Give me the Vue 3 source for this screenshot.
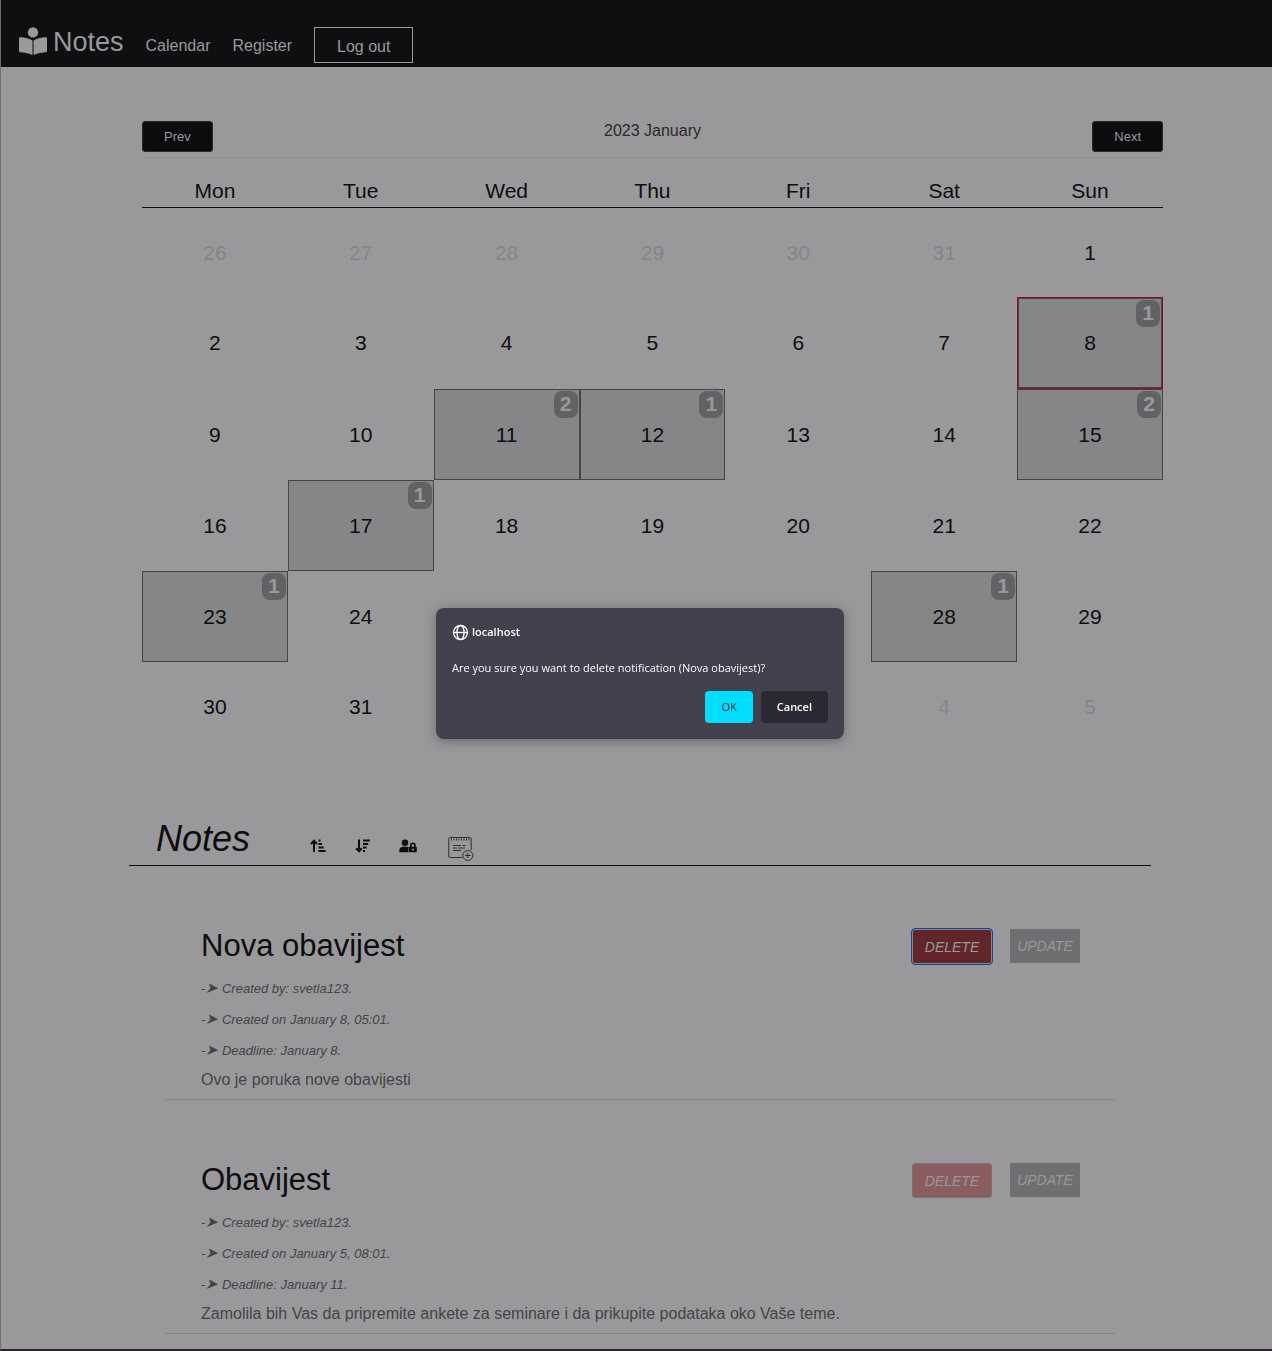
<script setup>
const dayNames = ['Mon', 'Tue', 'Wed', 'Thu', 'Fri', 'Sat', 'Sun']

const counts = { 8: 1, 11: 2, 12: 1, 15: 2, 17: 1, 23: 1, 28: 1 }
const today = 8

const cells = [
  ...[26, 27, 28, 29, 30, 31].map((day) => ({ day, outside: true })),
  ...Array.from({ length: 31 }, (_, i) => ({
    day: i + 1,
    outside: false,
    count: counts[i + 1] || 0,
    today: i + 1 === today,
  })),
  ...[1, 2, 3, 4, 5].map((day) => ({ day, outside: true })),
]
const weeks = Array.from({ length: 6 }, (_, i) => cells.slice(i * 7, i * 7 + 7))

const notes = [
  {
    title: 'Nova obavijest',
    meta: ['Created by: svetla123.', 'Created on January 8, 05:01.', 'Deadline: January 8.'],
    text: 'Ovo je poruka nove obavijesti',
    focused: true,
  },
  {
    title: 'Obavijest',
    meta: ['Created by: svetla123.', 'Created on January 5, 08:01.', 'Deadline: January 11.'],
    text: 'Zamolila bih Vas da pripremite ankete za seminare i da prikupite podataka oko Vaše teme.',
    focused: false,
  },
]
</script>

<template>
  <div class="page">
    <header class="navbar">
      <a class="brand" href="#">
        <svg width="28" height="28" viewBox="0 0 28 28" aria-hidden="true">
          <circle cx="14" cy="5.4" r="5.2" />
          <path d="M13.5 13.4C10.8 11.4 6 10.4 1.2 10.2.5 10.2 0 10.7 0 11.3v12.8c0 .6.5 1.1 1.1 1.1 3.7.2 8.5 1 11.6 2.500.4.2.8 0 .8-.5z" />
          <path d="M14.500 13.4C17.200 11.400 22 10.400 26.800 10.200c.7 0 1.200.5 1.200 1.100v12.800c0 .6-.5 1.100-1.100 1.100-3.700.2-8.500 1-11.600 2.500-.4.2-.8 0-.8-.5z" />
        </svg>
        <span>Notes</span>
      </a>
      <nav class="links">
        <a href="#">Calendar</a>
        <a href="#">Register</a>
        <button type="button" class="logout">Log out</button>
      </nav>
    </header>

    <main>
      <section class="calendar">
        <div class="month-bar">
          <button type="button">Prev</button>
          <span class="month">2023 January</span>
          <button type="button" class="next">Next</button>
        </div>
        <table>
          <thead>
            <tr>
              <th v-for="name in dayNames" :key="name" scope="col">{{ name }}</th>
            </tr>
          </thead>
          <tbody>
            <tr v-for="(week, w) in weeks" :key="w">
              <td
                v-for="(cell, d) in week"
                :key="d"
                :class="{ outside: cell.outside, busy: cell.count, today: cell.today }"
              >
                {{ cell.day }}<span v-if="cell.count" class="badge">{{ cell.count }}</span>
              </td>
            </tr>
          </tbody>
        </table>
      </section>

      <section class="notes">
        <div class="notes-head">
          <h1>Notes</h1>
          <div class="tools">
            <button type="button" class="small" aria-label="Sort ascending">
              <svg width="16" height="14" viewBox="0 0 16 14">
                <path d="M4 13V2M1 5l3-3.2L7 5" class="stroke" />
                <path d="M8.5.5h2v2h-2zM8.500 4h3.500v2H8.500zM8.500 7.500h5.200v2H8.500zM8.500 11h7v2h-7z" />
              </svg>
            </button>
            <button type="button" class="small" aria-label="Sort descending">
              <svg width="16" height="14" viewBox="0 0 16 14">
                <path d="M4 .5V12M1.200 9.200L4 12.200l2.800-3" class="stroke" />
                <path d="M8 .5h7v2H8zM8 4h5.200v2H8zM8 7.500h3.500v2H8zM8 11h2v2H8z" />
              </svg>
            </button>
            <button type="button" class="small" aria-label="Private notes">
              <svg width="18" height="14" viewBox="0 0 18 14">
                <circle cx="6" cy="3.7" r="3.3" />
                <path d="M.3 13.200v-1.700C.3 9.400 2 7.800 4.100 7.800h4.100c.7 0 1.300.2 1.800.4-.4.4-.5.8-.5 1.300v3c0 .3 0 .5.2.7z" />
                <path fill-rule="evenodd" d="M11 7.800V6.500a2.900 2.900 0 0 1 5.800 0v1.300h.2c.5 0 .8.4.8.8v3.800c0 .5-.4.8-.8.8h-6.200c-.5 0-.8-.4-.8-.8V8.600c0-.5.4-.8.8-.8zm1.600 0h2.600V6.500a1.300 1.300 0 0 0-2.600 0zm1.300 1.600a1 1 0 1 0 0 2.100 1 1 0 0 0 0-2.100z" />
              </svg>
            </button>
            <button type="button" class="add" aria-label="Add note">
              <svg width="26" height="24" viewBox="0 0 26 24" class="outline">
                <path d="M14 20.500H2.200a1.400 1.400 0 0 1-1.400-1.400V1.900C.8 1.100 1.400.5 2.200.5h19.600c.8 0 1.400.6 1.400 1.400V13" />
                <path d="M3.500 1.500v2M6 1.500v2M8.500 1.500v2M11 1.500v2M13.500 1.500v2M16 1.500v2M18.500 1.500v2M21 1.500v2" />
                <path d="M5 8.500h8M14.500 8.500h3M5 11h4M10 11h7M5 13.500h8" />
                <circle cx="19.800" cy="18.500" r="5" />
                <path d="M17 18.500h5.600M19.800 15.700v5.600" />
              </svg>
            </button>
          </div>
        </div>

        <article v-for="note in notes" :key="note.title" class="note">
          <div class="note-head">
            <h2>{{ note.title }}</h2>
            <div class="actions">
              <button type="button" class="delete" :class="{ focused: note.focused }">DELETE</button>
              <button type="button" class="update">UPDATE</button>
            </div>
          </div>
          <ul>
            <li v-for="line in note.meta" :key="line">-<span class="arrow">➤</span> {{ line }}</li>
          </ul>
          <p>{{ note.text }}</p>
        </article>
      </section>
    </main>

    <div class="dialog" role="alertdialog" aria-labelledby="origin" aria-describedby="question">
      <div class="origin">
        <svg width="17" height="17" viewBox="0 0 17 17" aria-hidden="true">
          <circle cx="8.5" cy="8.5" r="7" />
          <ellipse cx="8.5" cy="8.5" rx="3.6" ry="7" />
          <path d="M1.500 8.500h14" />
        </svg>
        <span id="origin">localhost</span>
      </div>
      <div id="question" class="question">Are you sure you want to delete notification (Nova obavijest)?</div>
      <div class="choices">
        <button type="button" class="ok">OK</button>
        <button type="button" class="cancel">Cancel</button>
      </div>
    </div>
  </div>
</template>

<style>
body {
  margin: 0;
  background: #99999b;
}
</style>

<style scoped>
* {
  box-sizing: border-box;
}
.page {
  min-height: 100vh;
  border-left: 1px solid #6d6d6f;
  border-bottom: 2px solid #262329;
  background: #99999b;
  color: #0d0d0f;
  font: 16px "Liberation Sans", Arial, sans-serif;
}
button {
  font: inherit;
  color: inherit;
  padding: 0;
  margin: 0;
  border: 0;
  background: none;
}
h1, h2, p, ul {
  margin: 0;
  padding: 0;
  font-weight: 400;
}
a {
  color: inherit;
  text-decoration: none;
}

.navbar {
  display: flex;
  align-items: flex-start;
  gap: 22px;
  padding: 27px 18px 4px;
  background: #0f0f11;
  color: #99999b;
}
.brand {
  display: flex;
  gap: 6px;
  font-size: 27px;
  line-height: 30px;
}
.brand svg {
  fill: #99999b;
}
.links {
  display: flex;
  gap: 22px;
  height: 36px;
  line-height: 38px;
}
.logout {
  height: 36px;
  padding: 0 22px;
  border: 1px solid #99999b;
}

.calendar {
  padding: 54px 109px 0 141px;
}
.month-bar {
  display: grid;
  grid-template-columns: 1fr auto 1fr;
  align-items: start;
  padding-bottom: 5px;
  border-bottom: 1px solid #8f8f91;
  color: #29292b;
}
.month-bar button {
  justify-self: start;
  height: 31px;
  padding: 0 21px;
  border: 1px solid #2a2a2c;
  border-radius: 3px;
  background: #0c0c0e;
  color: #99999b;
  font-size: 13px;
}
.month-bar .next {
  justify-self: end;
}
.month {
  line-height: 20px;
}
table {
  width: 100%;
  table-layout: fixed;
  border-collapse: separate;
  border-spacing: 0;
  font-size: 21px;
}
th {
  padding: 21px 0 4px;
  border-bottom: 1px solid #0d0d0f;
  font-weight: 400;
  line-height: 24px;
}
td {
  position: relative;
  height: 89px;
  padding: 0;
  text-align: center;
  vertical-align: middle;
}
.outside {
  color: #858587;
}
.busy {
  height: 91px;
  border: 1px solid #444446;
  background: #868688;
}
.today {
  height: 92px;
  border-color: #940f16;
  box-shadow: inset 0 0 0 1px #444446;
}
.badge {
  position: absolute;
  top: 1px;
  right: 1px;
  width: 24px;
  padding-bottom: 2px;
  border-radius: 8px;
  background: #626264;
  color: #99999b;
  font-weight: 700;
  line-height: 25px;
}
.today .badge {
  top: 2px;
  right: 2px;
}

.notes {
  padding: 66px 121px 13px 128px;
}
.notes-head {
  display: flex;
  align-items: flex-end;
  gap: 59px;
  padding: 0 27px 5px;
  border-bottom: 1px solid #0d0d0f;
}
h1 {
  font-size: 36px;
  font-style: italic;
  line-height: 43px;
}
.tools {
  display: flex;
  gap: 27px;
}
.tools button {
  display: flex;
  justify-content: center;
  width: 18px;
  height: 24px;
}
.tools .small {
  padding-top: 3px;
}
.tools .add {
  width: 34px;
  padding-top: 1px;
}
.tools svg {
  flex: none;
  fill: #0d0d0f;
}
.stroke {
  fill: none;
  stroke: #0d0d0f;
  stroke-width: 2;
}
.tools .outline {
  fill: none;
  stroke: #2e2e30;
}
.note {
  margin: 0 36px;
  padding: 60px 35px 7px 36px;
  border-bottom: 1px solid #868688;
  color: #444446;
}
.note-head {
  display: flex;
  justify-content: space-between;
  margin-bottom: 12px;
}
h2 {
  color: #0d0d0f;
  font-size: 31px;
  line-height: 40px;
}
.actions {
  display: flex;
  align-items: flex-start;
  gap: 18px;
  height: 38px;
  padding-top: 3px;
  font-size: 14px;
  font-style: italic;
}
.delete {
  width: 80px;
  height: 35px;
  border: 1px solid #7c7274;
  border-radius: 3px;
  background: #8c5d60;
  color: #99999b;
}
.delete.focused {
  border-color: #858587;
  outline: 1px solid #12479a;
  background: #62262a;
}
.update {
  width: 70px;
  height: 34px;
  background: #6f6f71;
  color: #99999b;
}
ul {
  display: flex;
  flex-direction: column;
  gap: 10px;
  list-style: none;
  font-size: 13px;
  font-style: italic;
  line-height: 21px;
}
li {
  height: 21px;
}
.arrow {
  font-size: 15px;
  line-height: 1;
}
.note p {
  margin-top: 7px;
  line-height: 24px;
}

.dialog {
  position: fixed;
  top: calc(50% - 68px);
  left: calc(50% - 200px);
  width: 408px;
  padding: 16px;
  border-radius: 8px;
  background: #42414d;
  box-shadow: 0 2px 12px rgba(20, 20, 26, 0.35);
  color: #fbfbfe;
  font: 500 11px/18px "Open Sans", "Noto Sans", sans-serif;
}
.origin {
  display: flex;
  align-items: center;
  gap: 3px;
  height: 17px;
  font-weight: 600;
}
.origin svg {
  fill: none;
  stroke: #fbfbfe;
  stroke-width: 1.4;
}
.question {
  margin: 18px 0 14px;
  white-space: nowrap;
}
.choices {
  display: flex;
  justify-content: flex-end;
  gap: 8px;
}
.choices button {
  height: 32px;
  padding: 0 16px;
  border-radius: 4px;
}
.ok {
  background: #00ddff;
  color: #2b2a33;
}
.cancel {
  background: #2b2a33;
  font-weight: 600;
}
</style>
